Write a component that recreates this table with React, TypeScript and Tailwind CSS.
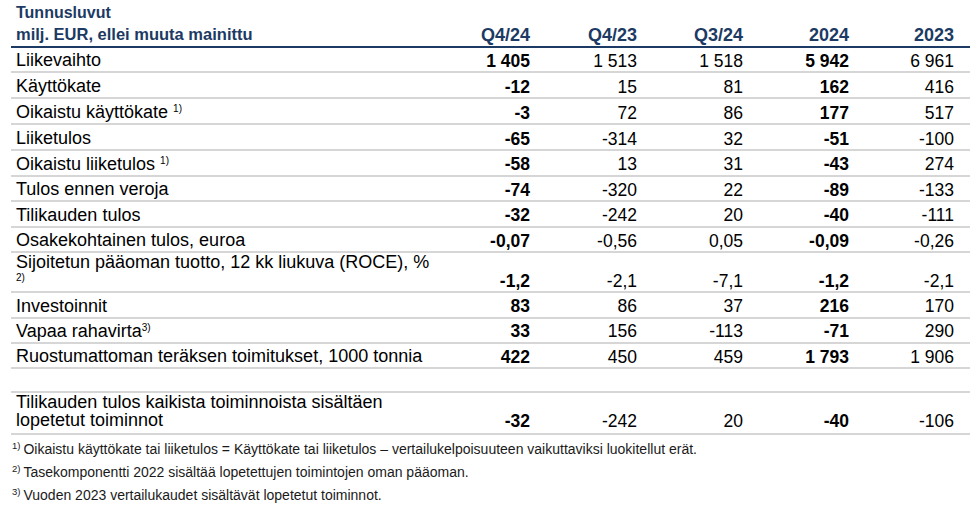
import type { ReactNode } from "react";

interface Row {
  label: ReactNode;
  values: string[];
  height: string;
  pad: string;
}

const sup = (n: string, space = true) => (
  <>
    {space ? " " : ""}
    <sup className="text-[10px] relative -top-[6px]">{n}</sup>
  </>
);

const rows: Row[] = [
  { label: "Liikevaihto", values: ["1 405", "1 513", "1 518", "5 942", "6 961"], height: "h-[23.7px]", pad: "pb-[1.5px]" },
  { label: "Käyttökate", values: ["-12", "15", "81", "162", "416"], height: "h-[24px]", pad: "pb-[1.5px]" },
  { label: <>Oikaistu käyttökate{sup("1)")}</>, values: ["-3", "72", "86", "177", "517"], height: "h-[24px]", pad: "pb-[1.5px]" },
  { label: "Liiketulos", values: ["-65", "-314", "32", "-51", "-100"], height: "h-[23.7px]", pad: "pb-[1.5px]" },
  { label: <>Oikaistu liiketulos{sup("1)")}</>, values: ["-58", "13", "31", "-43", "274"], height: "h-[23.7px]", pad: "pb-[1.5px]" },
  { label: "Tulos ennen veroja", values: ["-74", "-320", "22", "-89", "-133"], height: "h-[23.3px]", pad: "pb-[1.5px]" },
  { label: "Tilikauden tulos", values: ["-32", "-242", "20", "-40", "-111"], height: "h-[23.7px]", pad: "pb-[1.5px]" },
  { label: "Osakekohtainen tulos, euroa", values: ["-0,07", "-0,56", "0,05", "-0,09", "-0,26"], height: "h-[23.6px]", pad: "pb-[1.5px]" },
  {
    label: (
      <>
        Sijoitetun pääoman tuotto, 12 kk liukuva (ROCE), %
        <br />
        <sup className="text-[10px] relative -top-[6px]">2)</sup>
      </>
    ),
    values: ["-1,2", "-2,1", "-7,1", "-1,2", "-2,1"],
    height: "h-[37.4px]",
    pad: "pb-[2.5px]",
  },
  { label: "Investoinnit", values: ["83", "86", "37", "216", "170"], height: "h-[24px]", pad: "pb-[1.5px]" },
  { label: <>Vapaa rahavirta{sup("3)", false)}</>, values: ["33", "156", "-113", "-71", "290"], height: "h-[23px]", pad: "pb-[1.5px]" },
  { label: "Ruostumattoman teräksen toimitukset, 1000 tonnia", values: ["422", "450", "459", "1 793", "1 906"], height: "h-[23.6px]", pad: "pb-[1.5px]" },
  { label: "", values: ["", "", "", "", ""], height: "h-[21.4px]", pad: "pb-[1.5px]" },
  {
    label: (
      <>
        Tilikauden tulos kaikista toiminnoista sisältäen
        <br />
        lopetetut toiminnot
      </>
    ),
    values: ["-32", "-242", "20", "-40", "-106"],
    height: "h-[40.6px]",
    pad: "pb-[3.5px]",
  },
];

const columns = ["Q4/24", "Q4/23", "Q3/24", "2024", "2023"];
const boldCols = [0, 3];

const gridCols = "grid grid-cols-[429px_106px_107px_106px_106px_105px]";

function Footnote({ n, children }: { n: string; children: ReactNode }) {
  return (
    <p className="leading-[23px] whitespace-nowrap">
      <sup className="text-[9.5px] relative -top-[5px] mr-[3px]">{n}</sup>
      {children}
    </p>
  );
}

export default function App() {
  return (
    <div className="w-[976px] h-[512px] bg-white font-['Liberation_Sans',Arial,sans-serif] text-black overflow-hidden">
      <div className="ml-[11px] w-[959px]">
        {/* otsikkorivi */}
        <div className={`${gridCols} h-[47.7px] items-end border-b-2 border-[#1c3a63] text-[#1c3a63] font-bold`}>
          <div className="pl-[5px] pb-[1.5px] leading-[20.5px]">
            <p className="text-[16px]">Tunnusluvut</p>
            <p className="text-[16.5px]">milj. EUR, ellei muuta mainittu</p>
          </div>
          {columns.map((c) => (
            <div key={c} className="text-right pr-4 pb-[1.5px] text-[18px] leading-[18px]">
              {c}
            </div>
          ))}
        </div>

        {/* taulukon rivit */}
        {rows.map((row, i) => (
          <div
            key={i}
            className={`${gridCols} ${row.height} box-content items-end border-b-2 border-[#d6d6d6] text-[17.5px] leading-[18px]`}
          >
            <div className={`pl-[5px] text-[18px] leading-[18.5px] ${row.pad}`}>{row.label}</div>
            {row.values.map((v, j) => (
              <div
                key={j}
                className={`text-right pr-4 whitespace-nowrap ${row.pad} ${boldCols.includes(j) ? "font-bold" : ""}`}
              >
                {v}
              </div>
            ))}
          </div>
        ))}
      </div>

      {/* alaviitteet */}
      <div className="pl-[12px] pt-[3px] text-[14px] text-[#1a1a1a]">
        <Footnote n="1)">
          Oikaistu käyttökate tai liiketulos = Käyttökate tai liiketulos – vertailukelpoisuuteen vaikuttaviksi luokitellut erät.
        </Footnote>
        <Footnote n="2)">Tasekomponentti 2022 sisältää lopetettujen toimintojen oman pääoman.</Footnote>
        <Footnote n="3)">Vuoden 2023 vertailukaudet sisältävät lopetetut toiminnot.</Footnote>
      </div>
    </div>
  );
}
